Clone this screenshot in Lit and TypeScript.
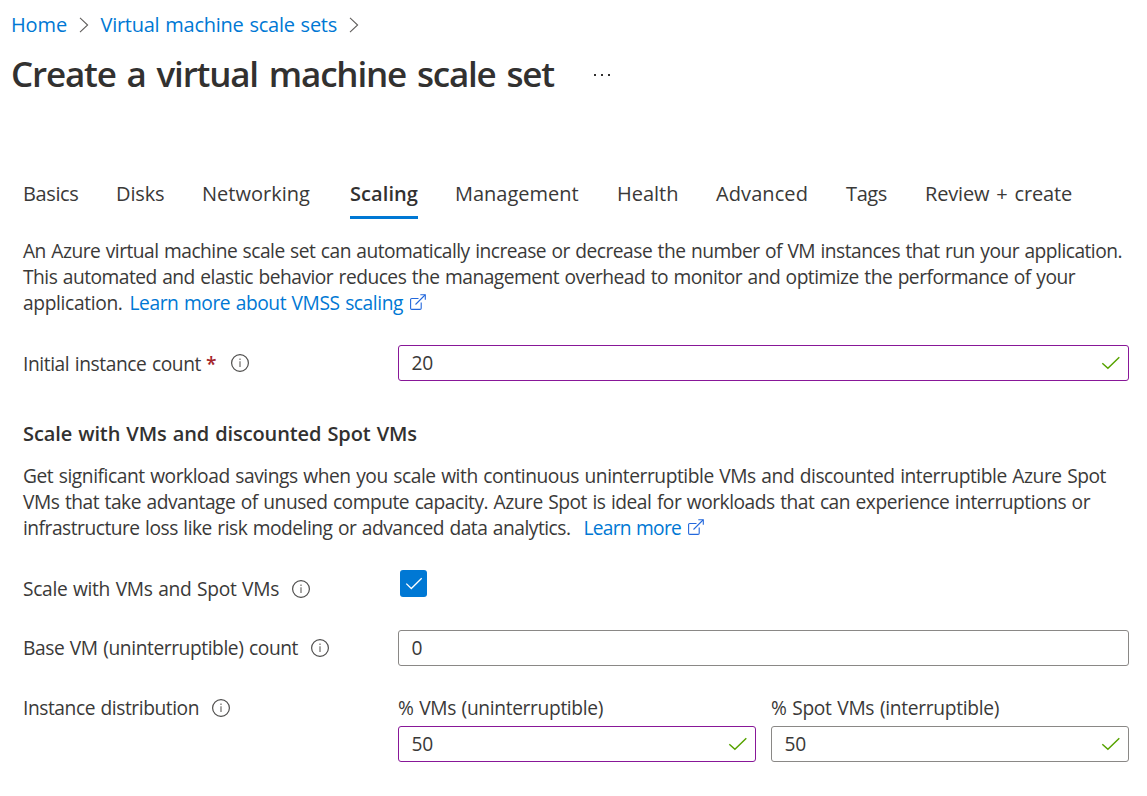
import { LitElement, html, css, svg } from "lit";
import { customElement, property } from "lit/decorators.js";

/** A single run of text, tracked so that it occupies the given measure. */
@customElement("text-run")
class TextRun extends LitElement {
  @property({ type: Number }) measure = 0;
  static styles = css`
    :host { display: inline-block; white-space: pre; }
    .run { display: inline-block; }
  `;
  render() {
    return html`<span class="run"><slot></slot></span>`;
  }
  firstUpdated() {
    const run = this.renderRoot.querySelector(".run") as HTMLElement;
    const count = (this.textContent || "").length;
    const natural = run.getBoundingClientRect().width;
    if (count && this.measure) {
      run.style.letterSpacing = `${(this.measure - natural) / count}px`;
    }
  }
}

@customElement("info-icon")
class InfoIcon extends LitElement {
  static styles = css`
    :host { display: block; width: 20px; height: 20px; }
    svg { display: block; }
  `;
  render() {
    return html`<svg width="20" height="20" viewBox="0 0 20 20" fill="none">
      <circle cx="10" cy="10" r="8.4" stroke="#4f4e4d" stroke-width="1.2" />
      <path d="M10 8.2V14" stroke="#8a8886" stroke-width="1.5" />
      <path d="M10 5.6V7.1" stroke="#8a8886" stroke-width="1.5" />
    </svg>`;
  }
}

@customElement("external-icon")
class ExternalIcon extends LitElement {
  static styles = css`
    :host { display: block; width: 16px; height: 16px; }
    svg { display: block; }
  `;
  render() {
    return html`<svg width="16" height="16" viewBox="0 0 16 16" fill="none" stroke="#2468dc" stroke-width="1.1">
      <path d="M8.5 4.5H1.7Q.6 4.5 .6 5.6V14.2Q.6 15.4 1.7 15.4H10Q11.2 15.4 11.2 14.2V8.5" />
      <path d="M5.5 10.5L15 1" />
      <path d="M10.3 .8H15.3V5.8" />
    </svg>`;
  }
}

@customElement("number-field")
class NumberField extends LitElement {
  @property() value = "";
  @property({ type: Boolean }) edited = false;
  @property({ type: Boolean }) valid = false;
  static styles = css`
    :host { display: block; }
    .box {
      box-sizing: border-box;
      height: 36px;
      border: 1px solid #8a8886;
      border-radius: 3px;
      padding: 0 7px 0 12.5px;
      display: flex;
      align-items: center;
      justify-content: space-between;
      background: #fff;
    }
    .edited { border-color: #881798; }
    .value { line-height: 34px; }
    svg { display: block; }
  `;
  render() {
    return html`<div class="box ${this.edited ? "edited" : ""}">
      <span class="value"><text-run measure=${this.value.length * 10.8}>${this.value}</text-run></span>
      ${this.valid
        ? html`<svg width="20" height="14" viewBox="0 0 20 14" fill="none">
            ${svg`<path d="M1.3 7.2L6.9 12.3L18.3 1.2" stroke="#57a300" stroke-width="1.5" />`}
          </svg>`
        : null}
    </div>`;
  }
}

const TABS: [string, number][] = [
  ["Basics", 55.5], ["Disks", 48.5], ["Networking", 108], ["Scaling", 68], ["Management", 123.5],
  ["Health", 61.5], ["Advanced", 92], ["Tags", 41], ["Review + create", 147],
];

@customElement("app-root")
class AppRoot extends LitElement {
  static styles = css`
    :host {
      display: block;
      box-sizing: border-box;
      height: 796px;
      overflow: hidden;
      background: #fff;
      color: #3a3938;
      font-family: "Open Sans", "Noto Sans", sans-serif;
      font-size: 19.2px;
      line-height: 26px;
      word-spacing: 1px;
    }
    a { color: #0078d4; text-decoration: none; }
    .crumbs { display: flex; align-items: center; height: 26px; padding: 12px 0 0 11px; font-size: 20px; }
    .chevron { display: block; margin: 0 11.5px 0 12px; }
    .title-row { display: flex; align-items: center; height: 50px; margin-top: 12px; padding-left: 11px; }
    h1 { margin: -2px 0 0; width: 583px; color: #323130; font-size: 35px; font-weight: 600; line-height: 50px; word-spacing: 3px; }
    .dots { display: block; }
    .tabs {
      display: grid;
      grid-template-columns: 93px 86px 148px 105px 162px 99px 130px 79px auto;
      margin: 81px 0 0 23px;
      font-size: 20px;
      word-spacing: 2px;
    }
    .tab { justify-self: start; height: 35px; border-bottom: 3px solid transparent; }
    .active { color: #323130; font-weight: 600; border-color: #0078d4; }
    .copy { margin-left: 23px; }
    .intro { margin-top: 19px; }
    .line { display: flex; height: 26px; }
    .more { display: flex; }
    .more external-icon { margin: 4px 0 0 7px; }
    .first-link { margin-left: 7px; }
    .second-link { margin-left: 13px; }
    .row { display: grid; grid-template-columns: 375px 731px; align-items: center; margin-left: 23px; }
    .label { display: flex; align-items: center; }
    .label info-icon { margin-left: 12px; }
    .count { margin-top: 29px; }
    .count .label text-run, .required { margin-top: 2px; }
    .required { color: #a4262c; margin-left: 5px; font-weight: 600; }
    .required + info-icon { margin-left: 13px; }
    h2 { margin: 40px 0 0 23px; color: #323130; font-size: 20px; font-weight: 600; line-height: 26px; }
    .about { margin-top: 16px; }
    .spot { margin-top: 29px; align-items: start; }
    .spot .label { margin-top: 6px; }
    .check {
      display: flex; align-items: center; justify-content: center;
      width: 27px; height: 27px; margin-left: 2px;
      border-radius: 3px; background: #0078d4;
    }
    .base { margin-top: 28px; }
    .distribution { margin-top: 29px; align-items: start; }
    .pair { display: grid; grid-template-columns: 358px 358px; column-gap: 15px; }
    .pair number-field { margin-top: 5px; }
  `;

  chevron() {
    return html`<svg class="chevron" width="10" height="16" viewBox="0 0 10 16" fill="none">
      <path d="M1 .8L8.6 8L1 15.2" stroke="#605e5c" stroke-width="1.1" />
    </svg>`;
  }

  render() {
    return html`
      <nav class="crumbs">
        <a><text-run measure="56">Home</text-run></a>
        ${this.chevron()}
        <a><text-run measure="236.5">Virtual machine scale sets</text-run></a>
        ${this.chevron()}
      </nav>
      <header class="title-row">
        <h1><text-run measure="543">Create a virtual machine scale set</text-run></h1>
        <svg class="dots" width="17" height="2" viewBox="0 0 17 2" fill="#323130">
          <rect x="0" y="0" width="2" height="2" /><rect x="7" y="0" width="2" height="2" /><rect x="14" y="0" width="2" height="2" />
        </svg>
      </header>
      <nav class="tabs">
        ${TABS.map(([name, measure]) => html`<div class="tab ${name === "Scaling" ? "active" : ""}"><text-run measure=${measure}>${name}</text-run></div>`)}
      </nav>
      <section class="copy intro">
        <div class="line"><text-run measure="1099">An Azure virtual machine scale set can automatically increase or decrease the number of VM instances that run your application.</text-run></div>
        <div class="line"><text-run measure="1052">This automated and elastic behavior reduces the management overhead to monitor and optimize the performance of your</text-run></div>
        <div class="line">
          <text-run measure="99.5">application.</text-run>
          <a class="more first-link"><text-run measure="273.5">Learn more about VMSS scaling</text-run><external-icon></external-icon></a>
        </div>
      </section>
      <div class="row count">
        <div class="label"><text-run measure="178">Initial instance count</text-run><span class="required">*</span><info-icon></info-icon></div>
        <number-field value="20" edited valid></number-field>
      </div>
      <h2><text-run measure="394">Scale with VMs and discounted Spot VMs</text-run></h2>
      <section class="copy about">
        <div class="line"><text-run measure="1083">Get significant workload savings when you scale with continuous uninterruptible VMs and discounted interruptible Azure Spot</text-run></div>
        <div class="line"><text-run measure="1067">VMs that take advantage of unused compute capacity. Azure Spot is ideal for workloads that can experience interruptions or</text-run></div>
        <div class="line">
          <text-run measure="547.5">infrastructure loss like risk modeling or advanced data analytics.</text-run>
          <a class="more second-link"><text-run measure="97.5">Learn more</text-run><external-icon></external-icon></a>
        </div>
      </section>
      <div class="row spot">
        <div class="label"><text-run measure="256">Scale with VMs and Spot VMs</text-run><info-icon></info-icon></div>
        <span class="check">
          <svg width="18" height="14" viewBox="0 0 18 14" fill="none"><path d="M1.3 6.6L6.3 11.5L16.7 1.2" stroke="#fff" stroke-width="1.3" /></svg>
        </span>
      </div>
      <div class="row base">
        <div class="label"><text-run measure="275">Base VM (uninterruptible) count</text-run><info-icon></info-icon></div>
        <number-field value="0"></number-field>
      </div>
      <div class="row distribution">
        <div class="label"><text-run measure="176">Instance distribution</text-run><info-icon></info-icon></div>
        <div class="pair">
          <div><text-run measure="205">% VMs (uninterruptible)</text-run><number-field value="50" edited valid></number-field></div>
          <div><text-run measure="228">% Spot VMs (interruptible)</text-run><number-field value="50" valid></number-field></div>
        </div>
      </div>
    `;
  }
}
